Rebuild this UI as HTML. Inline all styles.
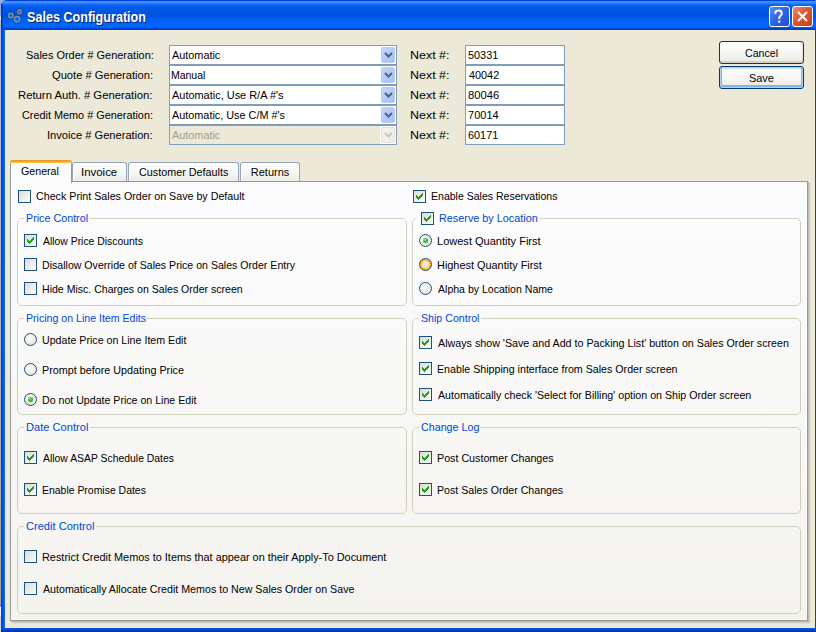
<!DOCTYPE html><html><head><meta charset="utf-8"><style>
*{margin:0;padding:0;box-sizing:border-box}
html,body{width:816px;height:632px;overflow:hidden;background:#9eaed6}
body{position:relative;font-family:"Liberation Sans", sans-serif;font-size:11px}
.t{position:absolute;white-space:nowrap;line-height:13px;font-size:11px}
.cb{position:absolute;width:13px;height:13px;border:1px solid #1C5180;background:linear-gradient(135deg,#DCDCD7 0%,#F0F0EA 60%,#FFFFFF 100%)}
.rb{position:absolute;width:13px;height:13px;border:1px solid #1C5180;border-radius:50%;background:radial-gradient(circle at 40% 35%,#FFFFFF 0%,#F2F2EE 40%,#D8D8D2 100%)}
.rb.hov{border-color:#1C5180;background:radial-gradient(circle closest-side,#F0EEE4 0px,#F0EEE2 2.6px,#FAD27A 3.4px,#F8BC44 4.6px,#F0A828 5.5px)}
.rb .dot{position:absolute;left:3px;top:3px;width:5px;height:5px;border-radius:50%;background:radial-gradient(circle at 35% 35%,#7AE07A 0%,#2EB82E 55%,#109010 100%)}
.grp{position:absolute;border:1px solid #D0D0BF;border-radius:3px}
.gap{position:absolute}
</style></head><body>
<div style="position:absolute;left:0;top:0;width:1px;height:632px;background:linear-gradient(180deg,#98A8E0 0px,#98A8E0 16px,#E8E8D0 17px,#E8E8D0 19px,#B0B8D8 21px,#B0B4C4 300px,#A8A488 600px,#A8A488 604px,#6070D0 605px,#6070D0 606px,#F4F4F4 607px,#F4F4F4 616px,#D0D0D0 617px)"></div>
<div style="position:absolute;left:1px;top:0;width:815px;height:632px;background:#0048D8;border-radius:6px 2px 0 0"></div>
<div style="position:absolute;left:1px;top:0;width:815px;height:30px;border-radius:6px 2px 0 0;background:linear-gradient(180deg,#0040D8 0px,#0040D8 1px,#3A8EFF 1px,#3A8EFF 2.5px,#0A64F0 5px,#0058E6 8px,#0053E0 16px,#005EF2 19px,#0066FC 24px,#0068FF 27px,#0050DC 28px,#0040C8 29px,#0040C8 30px)"></div>
<div style="position:absolute;left:1px;top:4px;width:2px;height:26px;background:linear-gradient(90deg,#0030B0,#0048D8)"></div>
<div style="position:absolute;left:1px;top:30px;width:4px;height:598px;background:linear-gradient(90deg,#0040C0,#0055EA 50%,#166AEE)"></div>
<div style="position:absolute;left:815px;top:30px;width:1px;height:598px;background:#0046D5"></div>
<div style="position:absolute;left:1px;top:628px;width:815px;height:4px;background:linear-gradient(180deg,#0058EC 0px,#0050DC 1px,#0044C4 2px,#003AAE 3px,#0030A0 4px)"></div>
<div style="position:absolute;left:5px;top:30px;width:810px;height:598px;background:#ECE9D8"></div>
<svg style="position:absolute;left:4px;top:6px" width="22" height="20" viewBox="0 0 22 20">
<g fill="none" stroke="#1E3C78" stroke-width="1.4" stroke-dasharray="1.2 1.3" opacity="0.9">
<circle cx="6.8" cy="9.5" r="3.6"/><circle cx="13.1" cy="13.3" r="4.1"/><circle cx="15.5" cy="5.7" r="3.1"/>
</g>
<g fill="none" stroke="#6E8EA4" stroke-width="1.7">
<circle cx="6.8" cy="9.5" r="2.2"/><circle cx="13.1" cy="13.3" r="2.6"/><circle cx="15.5" cy="5.7" r="1.8"/>
</g></svg>
<div style="position:absolute;left:28px;top:9px;font-family:Liberation Sans,sans-serif;font-weight:bold;font-size:14px;line-height:18px;color:#0A1E6A;white-space:nowrap;transform:scaleX(0.9);transform-origin:0 0">Sales Configuration</div>
<div style="position:absolute;left:27px;top:8px;font-family:Liberation Sans,sans-serif;font-weight:bold;font-size:14px;line-height:18px;color:#fff;white-space:nowrap;transform:scaleX(0.9);transform-origin:0 0">Sales Configuration</div>
<div style="position:absolute;left:769px;top:6px;width:21px;height:21px;border:1px solid #fff;border-radius:3px;background:linear-gradient(135deg,#5A8CF8 0%,#2D63E6 50%,#1E4FD0 100%)">
<svg width="19" height="19" style="position:absolute;left:-1px;top:0"><path d="M6.2 6.8 C6.2 4.6 7.6 3.6 9.5 3.6 C11.6 3.6 12.8 4.8 12.8 6.5 C12.8 8.6 10.2 9 10.2 11.2 L10.2 12" fill="none" stroke="#fff" stroke-width="2"/><rect x="9.1" y="13.5" width="2.2" height="2.2" fill="#fff"/></svg></div>
<div style="position:absolute;left:792px;top:6px;width:21px;height:21px;border:1px solid #fff;border-radius:3px;background:linear-gradient(135deg,#E8907A 0%,#DA5630 45%,#C8401A 100%)">
<svg width="19" height="19" style="position:absolute;left:0;top:0"><path d="M5 5 L14 14 M14 5 L5 14" stroke="#fff" stroke-width="2.2"/></svg></div>
<div class="t" id="t0" style="left:25.60px;top:49px;color:#000;transform:scaleX(0.9952);transform-origin:0 0;">Sales Order # Generation:</div>
<div style="position:absolute;left:169px;top:45px;width:228px;height:20px;border:1px solid #7F9DB9;background:#fff"></div>
<div class="t" id="t1" style="left:171.80px;top:49px;color:#000;transform:scaleX(0.9875);transform-origin:0 0;">Automatic</div>
<div style="position:absolute;left:381px;top:47px;width:14px;height:16px;border-radius:2px;background:linear-gradient(135deg,#C8D6FB 0%,#B6CAF7 50%,#A8C0F4 100%);border:1px solid #B8CCF8"></div>
<svg style="position:absolute;left:384px;top:52px" width="9" height="6"><path d="M1 1 L4.5 4.5 L8 1" fill="none" stroke="#4D6185" stroke-width="2"/></svg>
<div class="t" id="t2" style="left:410.17px;top:49px;color:#000;transform:scaleX(1.1333);transform-origin:0 0;">Next #:</div>
<div style="position:absolute;left:465px;top:45px;width:100px;height:20px;border:1px solid #7F9DB9;background:#fff"></div>
<div class="t" id="t3" style="left:467.61px;top:49px;color:#000;transform:scaleX(0.9897);transform-origin:0 0;">50331</div>
<div class="t" id="t4" style="left:51.69px;top:69px;color:#000;transform:scaleX(1.0133);transform-origin:0 0;">Quote # Generation:</div>
<div style="position:absolute;left:169px;top:65px;width:228px;height:20px;border:1px solid #7F9DB9;background:#fff"></div>
<div class="t" id="t5" style="left:170.85px;top:69px;color:#000;transform:scaleX(0.9514);transform-origin:0 0;">Manual</div>
<div style="position:absolute;left:381px;top:67px;width:14px;height:16px;border-radius:2px;background:linear-gradient(135deg,#C8D6FB 0%,#B6CAF7 50%,#A8C0F4 100%);border:1px solid #B8CCF8"></div>
<svg style="position:absolute;left:384px;top:72px" width="9" height="6"><path d="M1 1 L4.5 4.5 L8 1" fill="none" stroke="#4D6185" stroke-width="2"/></svg>
<div class="t" id="t6" style="left:410.17px;top:69px;color:#000;transform:scaleX(1.1333);transform-origin:0 0;">Next #:</div>
<div style="position:absolute;left:465px;top:65px;width:100px;height:20px;border:1px solid #7F9DB9;background:#fff"></div>
<div class="t" id="t7" style="left:468.60px;top:69px;color:#000;transform:scaleX(0.9867);transform-origin:0 0;">40042</div>
<div class="t" id="t8" style="left:18.47px;top:89px;color:#000;transform:scaleX(1.0271);transform-origin:0 0;">Return Auth. # Generation:</div>
<div style="position:absolute;left:169px;top:85px;width:228px;height:20px;border:1px solid #7F9DB9;background:#fff"></div>
<div class="t" id="t9" style="left:171.80px;top:89px;color:#000;transform:scaleX(0.9946);transform-origin:0 0;">Automatic, Use R/A #'s</div>
<div style="position:absolute;left:381px;top:87px;width:14px;height:16px;border-radius:2px;background:linear-gradient(135deg,#C8D6FB 0%,#B6CAF7 50%,#A8C0F4 100%);border:1px solid #B8CCF8"></div>
<svg style="position:absolute;left:384px;top:92px" width="9" height="6"><path d="M1 1 L4.5 4.5 L8 1" fill="none" stroke="#4D6185" stroke-width="2"/></svg>
<div class="t" id="t10" style="left:410.17px;top:89px;color:#000;transform:scaleX(1.1333);transform-origin:0 0;">Next #:</div>
<div style="position:absolute;left:465px;top:85px;width:100px;height:20px;border:1px solid #7F9DB9;background:#fff"></div>
<div class="t" id="t11" style="left:467.58px;top:89px;color:#000;transform:scaleX(1.0207);transform-origin:0 0;">80046</div>
<div class="t" id="t12" style="left:21.71px;top:109px;color:#000;transform:scaleX(0.9870);transform-origin:0 0;">Credit Memo # Generation:</div>
<div style="position:absolute;left:169px;top:105px;width:228px;height:20px;border:1px solid #7F9DB9;background:#fff"></div>
<div class="t" id="t13" style="left:171.80px;top:109px;color:#000;transform:scaleX(0.9860);transform-origin:0 0;">Automatic, Use C/M #'s</div>
<div style="position:absolute;left:381px;top:107px;width:14px;height:16px;border-radius:2px;background:linear-gradient(135deg,#C8D6FB 0%,#B6CAF7 50%,#A8C0F4 100%);border:1px solid #B8CCF8"></div>
<svg style="position:absolute;left:384px;top:112px" width="9" height="6"><path d="M1 1 L4.5 4.5 L8 1" fill="none" stroke="#4D6185" stroke-width="2"/></svg>
<div class="t" id="t14" style="left:410.17px;top:109px;color:#000;transform:scaleX(1.1333);transform-origin:0 0;">Next #:</div>
<div style="position:absolute;left:465px;top:105px;width:100px;height:20px;border:1px solid #7F9DB9;background:#fff"></div>
<div class="t" id="t15" style="left:467.60px;top:109px;color:#000;transform:scaleX(1.0034);transform-origin:0 0;">70014</div>
<div class="t" id="t16" style="left:46.99px;top:129px;color:#000;transform:scaleX(1.0097);transform-origin:0 0;">Invoice # Generation:</div>
<div style="position:absolute;left:169px;top:125px;width:228px;height:20px;border:1px solid #7F9DB9;background:#ECE9D8"></div>
<div style="position:absolute;left:380px;top:126px;width:16px;height:18px;background:#fff"></div>
<div class="t" id="t17" style="left:171.80px;top:129px;color:#A29E8E;transform:scaleX(0.9875);transform-origin:0 0;">Automatic</div>
<div style="position:absolute;left:381px;top:127px;width:14px;height:16px;border-radius:2px;background:linear-gradient(135deg,#F4F3EE,#EDEBE4);border:1px solid #E3E1D8"></div>
<svg style="position:absolute;left:384px;top:132px" width="9" height="6"><path d="M1 1 L4.5 4.5 L8 1" fill="none" stroke="#C9C7BA" stroke-width="2"/></svg>
<div class="t" id="t18" style="left:410.17px;top:129px;color:#000;transform:scaleX(1.1333);transform-origin:0 0;">Next #:</div>
<div style="position:absolute;left:465px;top:125px;width:100px;height:20px;border:1px solid #7F9DB9;background:#fff"></div>
<div class="t" id="t19" style="left:467.61px;top:129px;color:#000;transform:scaleX(0.9897);transform-origin:0 0;">60171</div>
<div style="position:absolute;left:719px;top:41px;width:85px;height:23px;border:1px solid #003C74;border-radius:3px;background:linear-gradient(180deg,#FFFFFF 0%,#F4F4F0 60%,#ECEBE6 90%,#D6D0C5 100%);box-shadow:inset 0 -2px 0 0 #D6D0C5, inset -1px 0 0 0 #E3DFD5;"></div>
<div class="t" id="t20" style="left:745.41px;top:47px;color:#000;transform:scaleX(0.9636);transform-origin:0 0;">Cancel</div>
<div style="position:absolute;left:719px;top:66px;width:85px;height:23px;border:1px solid #003C74;border-radius:3px;background:linear-gradient(180deg,#FFFFFF 0%,#F4F4F0 60%,#ECEBE6 90%,#D6D0C5 100%);box-shadow:inset 0 0 0 1px #B8CFF8, inset 0 -1px 0 2px #8AAEF0, inset 0 1px 0 1px #CEE0FE;"></div>
<div class="t" id="t21" style="left:749.20px;top:72px;color:#000;transform:scaleX(0.9917);transform-origin:0 0;">Save</div>
<div style="position:absolute;left:10px;top:181px;width:798px;height:440px;border:1px solid #919B9C;background:linear-gradient(180deg,#FCFCFE 0%,#F4F3EE 100%);box-shadow:inset -1px -1px 0 #FFFFFF, 1px 1px 0 #B8BCB8, 2px 2px 1px rgba(120,120,110,0.25)"></div>
<div style="position:absolute;left:72px;top:162px;width:55px;height:19px;border:1px solid #8FA5BA;border-bottom:none;border-radius:3px 3px 0 0;background:linear-gradient(180deg,#FFFFFF 0%,#F7F7F4 50%,#ECEBE6 100%);box-shadow:inset 1px 1px 0 #FFFFFF"></div>
<div class="t" id="t22" style="left:80.76px;top:166px;color:#000;transform:scaleX(1.0394);transform-origin:0 0;">Invoice</div>
<div style="position:absolute;left:128px;top:162px;width:111px;height:19px;border:1px solid #8FA5BA;border-bottom:none;border-radius:3px 3px 0 0;background:linear-gradient(180deg,#FFFFFF 0%,#F7F7F4 50%,#ECEBE6 100%);box-shadow:inset 1px 1px 0 #FFFFFF"></div>
<div class="t" id="t23" style="left:139.02px;top:166px;color:#000;transform:scaleX(0.9800);transform-origin:0 0;">Customer Defaults</div>
<div style="position:absolute;left:240px;top:162px;width:60px;height:19px;border:1px solid #8FA5BA;border-bottom:none;border-radius:3px 3px 0 0;background:linear-gradient(180deg,#FFFFFF 0%,#F7F7F4 50%,#ECEBE6 100%);box-shadow:inset 1px 1px 0 #FFFFFF"></div>
<div class="t" id="t24" style="left:250.80px;top:166px;color:#000;transform:scaleX(1.0000);transform-origin:0 0;">Returns</div>
<div style="position:absolute;left:10px;top:160px;width:62px;height:23px;border:1px solid #919B9C;border-bottom:none;border-top:none;border-radius:3px 3px 0 0;background:#FCFCFE"></div>
<div style="position:absolute;left:10px;top:160px;width:62px;height:3px;border-radius:3px 3px 0 0;background:linear-gradient(180deg,#E68B2C 0%,#FFC73C 100%)"></div>
<div class="t" id="t25" style="left:20.63px;top:165px;color:#000;transform:scaleX(0.9684);transform-origin:0 0;">General</div>
<div class="cb" style="left:18px;top:190px"></div>
<div class="t" id="t26" style="left:36.03px;top:190px;color:#000;transform:scaleX(0.9718);transform-origin:0 0;">Check Print Sales Order on Save by Default</div>
<div class="cb" style="left:413px;top:190px"><svg width="13" height="13" style="position:absolute;left:-1px;top:-1px" shape-rendering="crispEdges" fill="#21A121"><rect x="9" y="3" width="1" height="1"/><rect x="8" y="4" width="1" height="1"/><rect x="9" y="4" width="1" height="1"/><rect x="3" y="5" width="1" height="1"/><rect x="7" y="5" width="1" height="1"/><rect x="8" y="5" width="1" height="1"/><rect x="9" y="5" width="1" height="1"/><rect x="3" y="6" width="1" height="1"/><rect x="4" y="6" width="1" height="1"/><rect x="6" y="6" width="1" height="1"/><rect x="7" y="6" width="1" height="1"/><rect x="8" y="6" width="1" height="1"/><rect x="3" y="7" width="1" height="1"/><rect x="4" y="7" width="1" height="1"/><rect x="5" y="7" width="1" height="1"/><rect x="6" y="7" width="1" height="1"/><rect x="7" y="7" width="1" height="1"/><rect x="4" y="8" width="1" height="1"/><rect x="5" y="8" width="1" height="1"/><rect x="6" y="8" width="1" height="1"/><rect x="5" y="9" width="1" height="1"/></svg></div>
<div class="t" id="t27" style="left:430.84px;top:190px;color:#000;transform:scaleX(0.9573);transform-origin:0 0;">Enable Sales Reservations</div>
<svg style="position:absolute;left:17px;top:218px" width="390" height="88"><path d="M7 0.5 L3.5 0.5 L0.5 3.5 L0.5 84.5 L3.5 87.5 L386.5 87.5 L389.5 84.5 L389.5 3.5 L386.5 0.5 L73 0.5" fill="none" stroke="#D0D0BF" stroke-width="1"/></svg>
<div class="t" id="t28" style="left:25.52px;top:212px;color:#0046D5;transform:scaleX(0.9758);transform-origin:0 0;">Price Control</div>
<div class="cb" style="left:24px;top:234px"><svg width="13" height="13" style="position:absolute;left:-1px;top:-1px" shape-rendering="crispEdges" fill="#21A121"><rect x="9" y="3" width="1" height="1"/><rect x="8" y="4" width="1" height="1"/><rect x="9" y="4" width="1" height="1"/><rect x="3" y="5" width="1" height="1"/><rect x="7" y="5" width="1" height="1"/><rect x="8" y="5" width="1" height="1"/><rect x="9" y="5" width="1" height="1"/><rect x="3" y="6" width="1" height="1"/><rect x="4" y="6" width="1" height="1"/><rect x="6" y="6" width="1" height="1"/><rect x="7" y="6" width="1" height="1"/><rect x="8" y="6" width="1" height="1"/><rect x="3" y="7" width="1" height="1"/><rect x="4" y="7" width="1" height="1"/><rect x="5" y="7" width="1" height="1"/><rect x="6" y="7" width="1" height="1"/><rect x="7" y="7" width="1" height="1"/><rect x="4" y="8" width="1" height="1"/><rect x="5" y="8" width="1" height="1"/><rect x="6" y="8" width="1" height="1"/><rect x="5" y="9" width="1" height="1"/></svg></div>
<div class="t" id="t29" style="left:42.50px;top:235px;color:#000;transform:scaleX(0.9448);transform-origin:0 0;">Allow Price Discounts</div>
<div class="cb" style="left:24px;top:258px"></div>
<div class="t" id="t30" style="left:41.54px;top:259px;color:#000;transform:scaleX(0.9626);transform-origin:0 0;">Disallow Override of Sales Price on Sales Order Entry</div>
<div class="cb" style="left:24px;top:282px"></div>
<div class="t" id="t31" style="left:41.54px;top:283px;color:#000;transform:scaleX(0.9601);transform-origin:0 0;">Hide Misc. Charges on Sales Order screen</div>
<svg style="position:absolute;left:412px;top:218px" width="389" height="88"><path d="M4 0.5 L3.5 0.5 L0.5 3.5 L0.5 84.5 L3.5 87.5 L385.5 87.5 L388.5 84.5 L388.5 3.5 L385.5 0.5 L127 0.5" fill="none" stroke="#D0D0BF" stroke-width="1"/></svg>
<div class="cb" style="left:421px;top:212px"><svg width="13" height="13" style="position:absolute;left:-1px;top:-1px" shape-rendering="crispEdges" fill="#21A121"><rect x="9" y="3" width="1" height="1"/><rect x="8" y="4" width="1" height="1"/><rect x="9" y="4" width="1" height="1"/><rect x="3" y="5" width="1" height="1"/><rect x="7" y="5" width="1" height="1"/><rect x="8" y="5" width="1" height="1"/><rect x="9" y="5" width="1" height="1"/><rect x="3" y="6" width="1" height="1"/><rect x="4" y="6" width="1" height="1"/><rect x="6" y="6" width="1" height="1"/><rect x="7" y="6" width="1" height="1"/><rect x="8" y="6" width="1" height="1"/><rect x="3" y="7" width="1" height="1"/><rect x="4" y="7" width="1" height="1"/><rect x="5" y="7" width="1" height="1"/><rect x="6" y="7" width="1" height="1"/><rect x="7" y="7" width="1" height="1"/><rect x="4" y="8" width="1" height="1"/><rect x="5" y="8" width="1" height="1"/><rect x="6" y="8" width="1" height="1"/><rect x="5" y="9" width="1" height="1"/></svg></div>
<div class="t" id="t32" style="left:438.62px;top:212px;color:#0046D5;transform:scaleX(0.9848);transform-origin:0 0;">Reserve by Location</div>
<div class="rb" style="left:419px;top:234px"><div class="dot"></div></div>
<div class="t" id="t33" style="left:436.70px;top:235px;color:#000;transform:scaleX(1.0029);transform-origin:0 0;">Lowest Quantity First</div>
<div class="rb hov" style="left:419px;top:258px"></div>
<div class="t" id="t34" style="left:436.71px;top:259px;color:#000;transform:scaleX(0.9914);transform-origin:0 0;">Highest Quantity First</div>
<div class="rb" style="left:419px;top:282px"></div>
<div class="t" id="t35" style="left:437.70px;top:283px;color:#000;transform:scaleX(0.9588);transform-origin:0 0;">Alpha by Location Name</div>
<svg style="position:absolute;left:17px;top:318px" width="390" height="97"><path d="M7 0.5 L3.5 0.5 L0.5 3.5 L0.5 93.5 L3.5 96.5 L386.5 96.5 L389.5 93.5 L389.5 3.5 L386.5 0.5 L129 0.5" fill="none" stroke="#D0D0BF" stroke-width="1"/></svg>
<div class="t" id="t36" style="left:25.54px;top:312px;color:#0046D5;transform:scaleX(0.9626);transform-origin:0 0;">Pricing on Line Item Edits</div>
<div class="rb" style="left:24px;top:333px"></div>
<div class="t" id="t37" style="left:41.73px;top:334px;color:#000;transform:scaleX(0.9682);transform-origin:0 0;">Update Price on Line Item Edit</div>
<div class="rb" style="left:24px;top:363px"></div>
<div class="t" id="t38" style="left:41.72px;top:364px;color:#000;transform:scaleX(0.9797);transform-origin:0 0;">Prompt before Updating Price</div>
<div class="rb" style="left:24px;top:393px"><div class="dot"></div></div>
<div class="t" id="t39" style="left:41.74px;top:394px;color:#000;transform:scaleX(0.9642);transform-origin:0 0;">Do not Update Price on Line Edit</div>
<svg style="position:absolute;left:412px;top:318px" width="389" height="97"><path d="M7 0.5 L3.5 0.5 L0.5 3.5 L0.5 93.5 L3.5 96.5 L385.5 96.5 L388.5 93.5 L388.5 3.5 L385.5 0.5 L69 0.5" fill="none" stroke="#D0D0BF" stroke-width="1"/></svg>
<div class="t" id="t40" style="left:420.93px;top:312px;color:#0046D5;transform:scaleX(0.9661);transform-origin:0 0;">Ship Control</div>
<div class="cb" style="left:419px;top:336px"><svg width="13" height="13" style="position:absolute;left:-1px;top:-1px" shape-rendering="crispEdges" fill="#21A121"><rect x="9" y="3" width="1" height="1"/><rect x="8" y="4" width="1" height="1"/><rect x="9" y="4" width="1" height="1"/><rect x="3" y="5" width="1" height="1"/><rect x="7" y="5" width="1" height="1"/><rect x="8" y="5" width="1" height="1"/><rect x="9" y="5" width="1" height="1"/><rect x="3" y="6" width="1" height="1"/><rect x="4" y="6" width="1" height="1"/><rect x="6" y="6" width="1" height="1"/><rect x="7" y="6" width="1" height="1"/><rect x="8" y="6" width="1" height="1"/><rect x="3" y="7" width="1" height="1"/><rect x="4" y="7" width="1" height="1"/><rect x="5" y="7" width="1" height="1"/><rect x="6" y="7" width="1" height="1"/><rect x="7" y="7" width="1" height="1"/><rect x="4" y="8" width="1" height="1"/><rect x="5" y="8" width="1" height="1"/><rect x="6" y="8" width="1" height="1"/><rect x="5" y="9" width="1" height="1"/></svg></div>
<div class="t" id="t41" style="left:437.70px;top:337px;color:#000;transform:scaleX(0.9731);transform-origin:0 0;">Always show 'Save and Add to Packing List' button on Sales Order screen</div>
<div class="cb" style="left:419px;top:362px"><svg width="13" height="13" style="position:absolute;left:-1px;top:-1px" shape-rendering="crispEdges" fill="#21A121"><rect x="9" y="3" width="1" height="1"/><rect x="8" y="4" width="1" height="1"/><rect x="9" y="4" width="1" height="1"/><rect x="3" y="5" width="1" height="1"/><rect x="7" y="5" width="1" height="1"/><rect x="8" y="5" width="1" height="1"/><rect x="9" y="5" width="1" height="1"/><rect x="3" y="6" width="1" height="1"/><rect x="4" y="6" width="1" height="1"/><rect x="6" y="6" width="1" height="1"/><rect x="7" y="6" width="1" height="1"/><rect x="8" y="6" width="1" height="1"/><rect x="3" y="7" width="1" height="1"/><rect x="4" y="7" width="1" height="1"/><rect x="5" y="7" width="1" height="1"/><rect x="6" y="7" width="1" height="1"/><rect x="7" y="7" width="1" height="1"/><rect x="4" y="8" width="1" height="1"/><rect x="5" y="8" width="1" height="1"/><rect x="6" y="8" width="1" height="1"/><rect x="5" y="9" width="1" height="1"/></svg></div>
<div class="t" id="t42" style="left:436.73px;top:363px;color:#000;transform:scaleX(0.9688);transform-origin:0 0;">Enable Shipping interface from Sales Order screen</div>
<div class="cb" style="left:419px;top:388px"><svg width="13" height="13" style="position:absolute;left:-1px;top:-1px" shape-rendering="crispEdges" fill="#21A121"><rect x="9" y="3" width="1" height="1"/><rect x="8" y="4" width="1" height="1"/><rect x="9" y="4" width="1" height="1"/><rect x="3" y="5" width="1" height="1"/><rect x="7" y="5" width="1" height="1"/><rect x="8" y="5" width="1" height="1"/><rect x="9" y="5" width="1" height="1"/><rect x="3" y="6" width="1" height="1"/><rect x="4" y="6" width="1" height="1"/><rect x="6" y="6" width="1" height="1"/><rect x="7" y="6" width="1" height="1"/><rect x="8" y="6" width="1" height="1"/><rect x="3" y="7" width="1" height="1"/><rect x="4" y="7" width="1" height="1"/><rect x="5" y="7" width="1" height="1"/><rect x="6" y="7" width="1" height="1"/><rect x="7" y="7" width="1" height="1"/><rect x="4" y="8" width="1" height="1"/><rect x="5" y="8" width="1" height="1"/><rect x="6" y="8" width="1" height="1"/><rect x="5" y="9" width="1" height="1"/></svg></div>
<div class="t" id="t43" style="left:437.70px;top:389px;color:#000;transform:scaleX(0.9669);transform-origin:0 0;">Automatically check 'Select for Billing' option on Ship Order screen</div>
<svg style="position:absolute;left:17px;top:427px" width="390" height="87"><path d="M7 0.5 L3.5 0.5 L0.5 3.5 L0.5 83.5 L3.5 86.5 L386.5 86.5 L389.5 83.5 L389.5 3.5 L386.5 0.5 L73 0.5" fill="none" stroke="#D0D0BF" stroke-width="1"/></svg>
<div class="t" id="t44" style="left:25.69px;top:421px;color:#0046D5;transform:scaleX(1.0100);transform-origin:0 0;">Date Control</div>
<div class="cb" style="left:24px;top:451px"><svg width="13" height="13" style="position:absolute;left:-1px;top:-1px" shape-rendering="crispEdges" fill="#21A121"><rect x="9" y="3" width="1" height="1"/><rect x="8" y="4" width="1" height="1"/><rect x="9" y="4" width="1" height="1"/><rect x="3" y="5" width="1" height="1"/><rect x="7" y="5" width="1" height="1"/><rect x="8" y="5" width="1" height="1"/><rect x="9" y="5" width="1" height="1"/><rect x="3" y="6" width="1" height="1"/><rect x="4" y="6" width="1" height="1"/><rect x="6" y="6" width="1" height="1"/><rect x="7" y="6" width="1" height="1"/><rect x="8" y="6" width="1" height="1"/><rect x="3" y="7" width="1" height="1"/><rect x="4" y="7" width="1" height="1"/><rect x="5" y="7" width="1" height="1"/><rect x="6" y="7" width="1" height="1"/><rect x="7" y="7" width="1" height="1"/><rect x="4" y="8" width="1" height="1"/><rect x="5" y="8" width="1" height="1"/><rect x="6" y="8" width="1" height="1"/><rect x="5" y="9" width="1" height="1"/></svg></div>
<div class="t" id="t45" style="left:42.50px;top:452px;color:#000;transform:scaleX(0.9449);transform-origin:0 0;">Allow ASAP Schedule Dates</div>
<div class="cb" style="left:24px;top:483px"><svg width="13" height="13" style="position:absolute;left:-1px;top:-1px" shape-rendering="crispEdges" fill="#21A121"><rect x="9" y="3" width="1" height="1"/><rect x="8" y="4" width="1" height="1"/><rect x="9" y="4" width="1" height="1"/><rect x="3" y="5" width="1" height="1"/><rect x="7" y="5" width="1" height="1"/><rect x="8" y="5" width="1" height="1"/><rect x="9" y="5" width="1" height="1"/><rect x="3" y="6" width="1" height="1"/><rect x="4" y="6" width="1" height="1"/><rect x="6" y="6" width="1" height="1"/><rect x="7" y="6" width="1" height="1"/><rect x="8" y="6" width="1" height="1"/><rect x="3" y="7" width="1" height="1"/><rect x="4" y="7" width="1" height="1"/><rect x="5" y="7" width="1" height="1"/><rect x="6" y="7" width="1" height="1"/><rect x="7" y="7" width="1" height="1"/><rect x="4" y="8" width="1" height="1"/><rect x="5" y="8" width="1" height="1"/><rect x="6" y="8" width="1" height="1"/><rect x="5" y="9" width="1" height="1"/></svg></div>
<div class="t" id="t46" style="left:41.55px;top:484px;color:#000;transform:scaleX(0.9491);transform-origin:0 0;">Enable Promise Dates</div>
<svg style="position:absolute;left:412px;top:427px" width="389" height="87"><path d="M7 0.5 L3.5 0.5 L0.5 3.5 L0.5 83.5 L3.5 86.5 L385.5 86.5 L388.5 83.5 L388.5 3.5 L385.5 0.5 L68 0.5" fill="none" stroke="#D0D0BF" stroke-width="1"/></svg>
<div class="t" id="t47" style="left:420.53px;top:421px;color:#0046D5;transform:scaleX(0.9741);transform-origin:0 0;">Change Log</div>
<div class="cb" style="left:419px;top:451px"><svg width="13" height="13" style="position:absolute;left:-1px;top:-1px" shape-rendering="crispEdges" fill="#21A121"><rect x="9" y="3" width="1" height="1"/><rect x="8" y="4" width="1" height="1"/><rect x="9" y="4" width="1" height="1"/><rect x="3" y="5" width="1" height="1"/><rect x="7" y="5" width="1" height="1"/><rect x="8" y="5" width="1" height="1"/><rect x="9" y="5" width="1" height="1"/><rect x="3" y="6" width="1" height="1"/><rect x="4" y="6" width="1" height="1"/><rect x="6" y="6" width="1" height="1"/><rect x="7" y="6" width="1" height="1"/><rect x="8" y="6" width="1" height="1"/><rect x="3" y="7" width="1" height="1"/><rect x="4" y="7" width="1" height="1"/><rect x="5" y="7" width="1" height="1"/><rect x="6" y="7" width="1" height="1"/><rect x="7" y="7" width="1" height="1"/><rect x="4" y="8" width="1" height="1"/><rect x="5" y="8" width="1" height="1"/><rect x="6" y="8" width="1" height="1"/><rect x="5" y="9" width="1" height="1"/></svg></div>
<div class="t" id="t48" style="left:436.63px;top:452px;color:#000;transform:scaleX(0.9729);transform-origin:0 0;">Post Customer Changes</div>
<div class="cb" style="left:419px;top:483px"><svg width="13" height="13" style="position:absolute;left:-1px;top:-1px" shape-rendering="crispEdges" fill="#21A121"><rect x="9" y="3" width="1" height="1"/><rect x="8" y="4" width="1" height="1"/><rect x="9" y="4" width="1" height="1"/><rect x="3" y="5" width="1" height="1"/><rect x="7" y="5" width="1" height="1"/><rect x="8" y="5" width="1" height="1"/><rect x="9" y="5" width="1" height="1"/><rect x="3" y="6" width="1" height="1"/><rect x="4" y="6" width="1" height="1"/><rect x="6" y="6" width="1" height="1"/><rect x="7" y="6" width="1" height="1"/><rect x="8" y="6" width="1" height="1"/><rect x="3" y="7" width="1" height="1"/><rect x="4" y="7" width="1" height="1"/><rect x="5" y="7" width="1" height="1"/><rect x="6" y="7" width="1" height="1"/><rect x="7" y="7" width="1" height="1"/><rect x="4" y="8" width="1" height="1"/><rect x="5" y="8" width="1" height="1"/><rect x="6" y="8" width="1" height="1"/><rect x="5" y="9" width="1" height="1"/></svg></div>
<div class="t" id="t49" style="left:436.64px;top:484px;color:#000;transform:scaleX(0.9643);transform-origin:0 0;">Post Sales Order Changes</div>
<svg style="position:absolute;left:17px;top:526px" width="784" height="88"><path d="M7 0.5 L3.5 0.5 L0.5 3.5 L0.5 84.5 L3.5 87.5 L780.5 87.5 L783.5 84.5 L783.5 3.5 L780.5 0.5 L79 0.5" fill="none" stroke="#D0D0BF" stroke-width="1"/></svg>
<div class="t" id="t50" style="left:25.69px;top:520px;color:#0046D5;transform:scaleX(1.0076);transform-origin:0 0;">Credit Control</div>
<div class="cb" style="left:24px;top:550px"></div>
<div class="t" id="t51" style="left:41.51px;top:551px;color:#000;transform:scaleX(0.9899);transform-origin:0 0;">Restrict Credit Memos to Items that appear on their Apply-To Document</div>
<div class="cb" style="left:24px;top:582px"></div>
<div class="t" id="t52" style="left:42.50px;top:583px;color:#000;transform:scaleX(0.9703);transform-origin:0 0;">Automatically Allocate Credit Memos to New Sales Order on Save</div>
</body></html>
